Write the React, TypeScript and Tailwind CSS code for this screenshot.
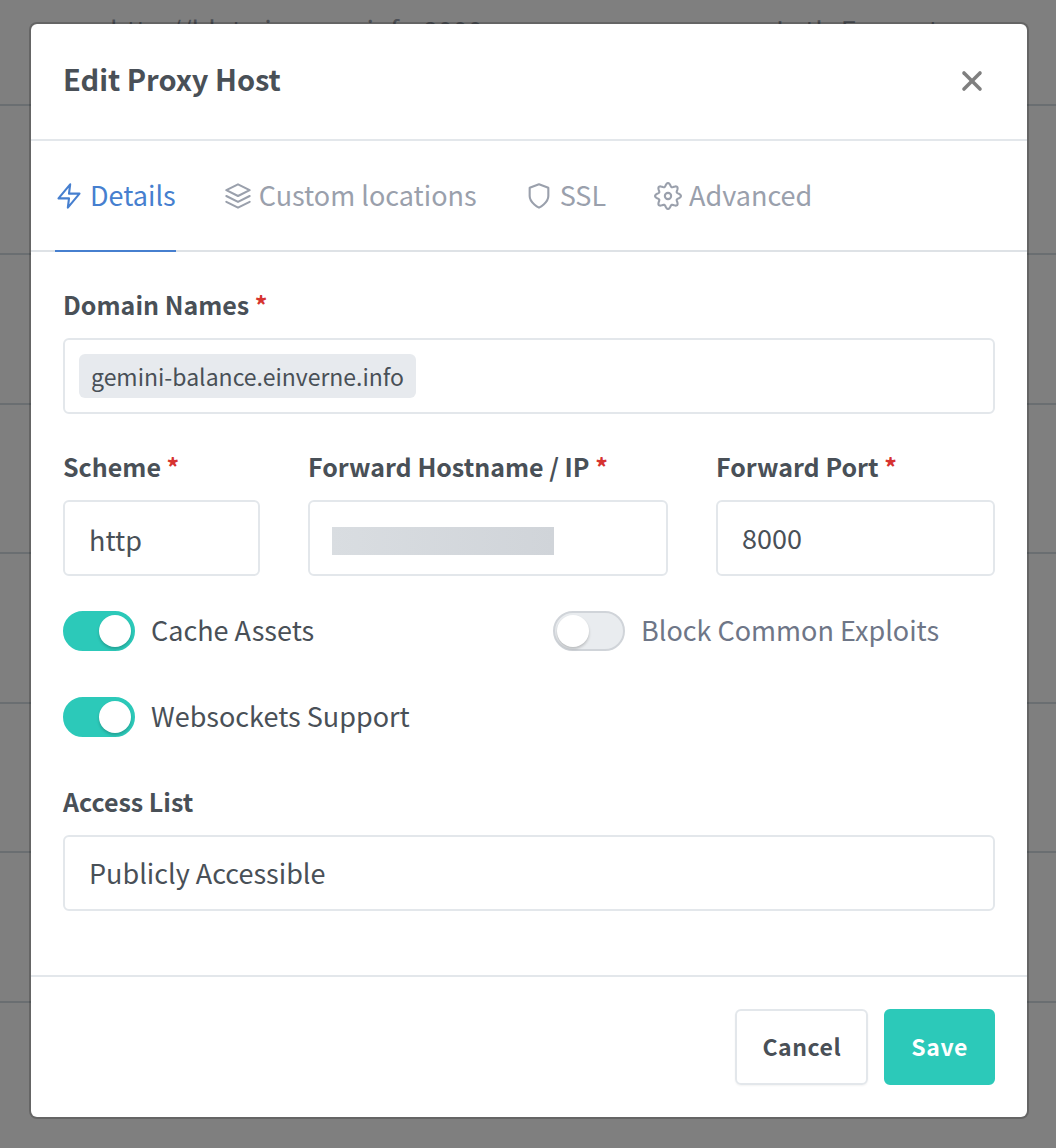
import { useState } from 'react';
import type { ReactNode } from 'react';
import { FiLayers, FiShield, FiX, FiZap } from 'react-icons/fi';

// Outline of a soft gear with eight rounded teeth
const gearPath =
  Array.from({ length: 96 }, (_, i) => {
    const angle = (i / 96) * Math.PI * 2;
    const r = 9.6 + 1.5 * Math.cos(8 * angle);
    return `${i ? 'L' : 'M'}${(12 + r * Math.sin(angle)).toFixed(2)} ${(12 - r * Math.cos(angle)).toFixed(2)}`;
  }).join('') + 'Z';

function GearIcon({ className, strokeWidth }: { className?: string; strokeWidth?: number }) {
  return (
    <svg
      viewBox="0 0 24 24"
      fill="none"
      stroke="currentColor"
      strokeWidth={strokeWidth}
      strokeLinejoin="round"
      className={className}
    >
      <circle cx="12" cy="12" r="2.7" />
      <path d={gearPath} />
    </svg>
  );
}

const tabs = [
  { id: 'details', label: 'Details', Icon: FiZap },
  { id: 'locations', label: 'Custom locations', Icon: FiLayers },
  { id: 'ssl', label: 'SSL', Icon: FiShield },
  { id: 'advanced', label: 'Advanced', Icon: GearIcon },
];

const emptyRows = [1, 2, 3, 4, 5, 6];

const fieldClass =
  'block w-full h-[76px] appearance-none rounded-md border-2 border-[#e3e7eb] bg-white px-6 text-[27px] text-[#495057] outline-none focus:border-[#467fcf]';

function Label({ htmlFor, required, children }: { htmlFor: string; required?: boolean; children: ReactNode }) {
  return (
    <label htmlFor={htmlFor} className="mb-4 block text-[25px] leading-9 font-bold whitespace-nowrap">
      {children}
      {required && <span className="text-[#d63330]"> *</span>}
    </label>
  );
}

function Toggle({ label, defaultChecked = false }: { label: string; defaultChecked?: boolean }) {
  const [on, setOn] = useState(defaultChecked);
  return (
    <label className="flex h-10 cursor-pointer items-center gap-4 text-[27px]">
      <input type="checkbox" checked={on} onChange={e => setOn(e.target.checked)} className="peer sr-only" />
      <span className="flex h-10 w-[72px] items-center rounded-full border-2 border-[#d0d4d9] bg-[#e9ecef] px-0.5 peer-checked:justify-end peer-checked:border-[#2cc9b9] peer-checked:bg-[#2cc9b9]">
        <span className="size-8 rounded-full bg-white shadow-[0_2px_3px_rgba(0,0,0,0.2)]" />
      </span>
      <span className="pb-0.5 text-[#6e7687] peer-checked:text-[#495057]">{label}</span>
    </label>
  );
}

export default function App() {
  const [tab, setTab] = useState('details');

  return (
    <div className="relative min-h-screen overflow-hidden bg-white font-['Noto_Sans_CJK_SC','Noto_Sans',sans-serif] text-[#495057]">
      {/* Hosts table behind the dialog */}
      <table className="absolute inset-x-0 top-0 w-full text-[27px] leading-9 text-[#9aa0ac]">
        <tbody>
          <tr className="h-[105px] border-b-2 border-[#d5dce3] align-top">
            <td className="w-[776px] pt-3 pl-[110px]">http://blot.einverne.info:8000</td>
            <td className="pt-3">Let's Encrypt</td>
          </tr>
          {emptyRows.map(row => (
            <tr key={row} className="h-[149px] border-b-2 border-[#d5dce3] odd:h-[150px]">
              <td />
              <td />
            </tr>
          ))}
        </tbody>
      </table>

      <div className="relative min-h-screen bg-black/50 pt-[22px] pr-[27px] pb-[29px] pl-[29px]">
        <div role="dialog" aria-labelledby="dialog-title" className="rounded-lg border-2 border-black/20 bg-white bg-clip-padding">
          <div className="flex h-[117px] items-center justify-between border-b-2 border-[#e3e7eb] px-8 pb-0.5">
            <h5 id="dialog-title" className="pb-1 text-[29px] font-bold">Edit Proxy Host</h5>
            <button aria-label="Close" className="mr-[7px] text-[#7f7f7f]">
              <FiX className="size-8" strokeWidth={2.7} />
            </button>
          </div>

          <div role="tablist" className="flex h-[111px] gap-12 border-b-2 border-[#dee2e6] px-6">
            {tabs.map(({ id, label, Icon }) => (
              <button
                key={id}
                role="tab"
                aria-selected={tab === id}
                onClick={() => setTab(id)}
                className={`-mb-0.5 flex items-center gap-[7px] border-b-2 text-[27px] whitespace-nowrap ${
                  tab === id ? 'border-[#467fcf] text-[#467fcf]' : 'border-transparent text-[#9aa0ac]'
                }`}
              >
                <Icon className="size-7" strokeWidth={1.8} />
                {label}
              </button>
            ))}
          </div>

          <form className="px-8 pt-[34px] pb-16" onSubmit={e => e.preventDefault()}>
            <Label htmlFor="domains" required>Domain Names</Label>
            <div className="mb-[34px] flex h-[76px] items-center gap-2 rounded-md border-2 border-[#e3e7eb] px-3.5">
              <span className="rounded-md bg-[#e7eaee] px-3 text-[23px] leading-[44px]">gemini-balance.einverne.info</span>
              <input id="domains" className="min-w-0 flex-1 outline-none" />
            </div>

            <div className="mb-[35px] grid grid-cols-[197fr_360fr_279fr] gap-12">
              <div>
                <Label htmlFor="scheme" required>Scheme</Label>
                <select id="scheme" className={`${fieldClass} pt-1`}>
                  <option>http</option>
                  <option>https</option>
                </select>
              </div>
              <div>
                <Label htmlFor="host" required>Forward Hostname / IP</Label>
                <div className="relative">
                  <input id="host" className={fieldClass} />
                  <span className="absolute top-[27px] left-6 h-7 w-[222px] bg-linear-to-r from-[#d9dde1] to-[#d0d4d9]" />
                </div>
              </div>
              <div>
                <Label htmlFor="port" required>Forward Port</Label>
                <input id="port" defaultValue="8000" className={`${fieldClass} pb-0.5`} />
              </div>
            </div>

            <div className="mb-[46px] grid grid-cols-2 gap-x-12 gap-y-[46px]">
              <Toggle label="Cache Assets" defaultChecked />
              <Toggle label="Block Common Exploits" />
              <Toggle label="Websockets Support" defaultChecked />
            </div>

            <Label htmlFor="access">Access List</Label>
            <select id="access" className={fieldClass}>
              <option>Publicly Accessible</option>
            </select>
          </form>

          <div className="flex justify-end gap-4 border-t-2 border-[#e3e7eb] p-8">
            <button className="h-[76px] rounded-md border-2 border-[#e3e7eb] px-[25px] pb-0.5 text-[23px] font-bold tracking-wide shadow-xs">
              Cancel
            </button>
            <button className="h-[76px] rounded-md border-2 border-[#2cc9b9] bg-[#2cc9b9] px-[25px] pb-0.5 text-[23px] font-bold tracking-wide text-white">
              Save
            </button>
          </div>
        </div>
      </div>
    </div>
  );
}
